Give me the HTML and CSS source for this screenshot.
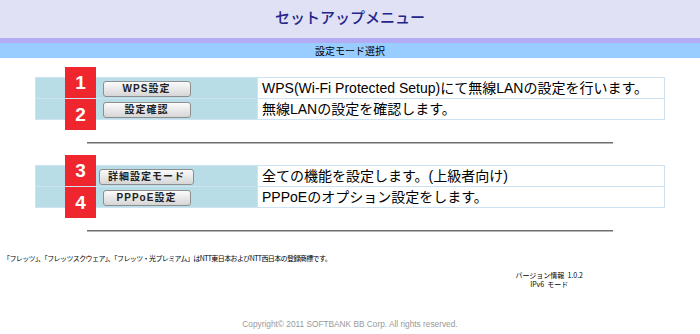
FILE: index.html
```html
<!DOCTYPE html>
<html lang="ja">
<head>
  <meta charset="UTF-8">
  <meta name="viewport" content="width=device-width, initial-scale=1.0">
  <title>セットアップメニュー</title>
  <link rel="stylesheet" href="styles.css">
</head>
<body>
  <div class="header">
    <h1 class="title">セットアップメニュー</h1>
  </div>
  <div class="stripe"></div>
  <div class="subtitle">設定モード選択</div>

  <div class="menu menu-first">
    <table class="menu-table">
      <tr>
        <td class="menu-btn"><button class="btn">WPS設定</button></td>
        <td class="menu-desc">WPS(Wi-Fi Protected Setup)にて無線LANの設定を行います。</td>
      </tr>
      <tr>
        <td class="menu-btn"><button class="btn">設定確認</button></td>
        <td class="menu-desc">無線LANの設定を確認します。</td>
      </tr>
    </table>
    <span class="badge badge-top">1</span>
    <span class="badge badge-bottom">2</span>
  </div>

  <hr class="rule">

  <div class="menu">
    <table class="menu-table">
      <tr>
        <td class="menu-btn"><button class="btn">詳細設定モード</button></td>
        <td class="menu-desc">全ての機能を設定します。(上級者向け)</td>
      </tr>
      <tr>
        <td class="menu-btn"><button class="btn">PPPoE設定</button></td>
        <td class="menu-desc">PPPoEのオプション設定をします。</td>
      </tr>
    </table>
    <span class="badge badge-top">3</span>
    <span class="badge badge-bottom">4</span>
  </div>

  <hr class="rule">

  <p class="note">「フレッツ」、「フレッツスクウェア」、「フレッツ・光プレミアム」はNTT東日本およびNTT西日本の登録商標です。</p>

  <div class="version">
    <div class="version-box">
      <div>バージョン情報&nbsp;&nbsp;1.0.2</div>
      <div>IPv6&nbsp;&nbsp;モード</div>
    </div>
  </div>

  <p class="copyright">Copyright© 2011 SOFTBANK BB Corp. All rights reserved.</p>
</body>
</html>
```

FILE: styles.css
```css
body {
  margin: 0;
  font-family: "Liberation Sans", "Noto Sans CJK JP", sans-serif;
  background-color: white;
  color: black;
}
.header {
  background: #e1e1f5;
  height: 38px;
}
.title {
  margin: 0;
  text-align: center;
  font-size: 15px;
  font-weight: 500;
  line-height: 34px;
  color: #25258a;
  font-family: "Noto Sans CJK JP", sans-serif;
}
.stripe {
  height: 5px;
  background: #b4abf5;
}
.subtitle {
  height: 15px;
  line-height: 15px;
  background: #99ccff;
  text-align: center;
  font-size: 10px;
  font-family: "Noto Sans CJK JP", sans-serif;
}
.menu {
  position: relative;
  width: 630px;
  margin-left: 35px;
}
.menu-first {
  margin-top: 19px;
}
.menu-table {
  width: 100%;
  border-collapse: collapse;
}
.menu-table td {
  height: 20px;
  padding: 0;
  border: 1px solid #cde2f3;
}
.menu-btn {
  width: 221px;
  background: #b9dde6;
  text-align: center;
}
.menu-desc {
  padding-left: 4px !important;
  font-size: 14px;
  line-height: 19px;
  white-space: nowrap;
}
.btn {
  min-width: 88px;
  height: 16px;
  padding: 0 8px;
  border: 1px solid #8e8e8e;
  border-radius: 3px;
  background: linear-gradient(#fbfbfb, #d6d6d6);
  font-family: "Liberation Sans", "Noto Sans CJK JP", sans-serif;
  font-size: 10px;
  font-weight: bold;
  letter-spacing: 1px;
  line-height: 14px;
  color: #222;
  vertical-align: middle;
}
.badge {
  position: absolute;
  left: 30px;
  width: 31px;
  height: 31px;
  background: #f0262e;
  color: white;
  font-size: 19px;
  font-weight: bold;
  display: flex;
  align-items: center;
  justify-content: center;
}
.badge-top {
  top: -10px;
}
.badge-bottom {
  top: 22px;
}
.rule {
  width: 526px;
  height: 0;
  margin: 22px auto 21px;
  border: none;
  border-top: 1px solid #6f6f6f;
  border-bottom: 1px solid #b5b5b5;
}
.note {
  margin: 22px 0 0 3px;
  font-size: 7px;
  letter-spacing: -0.6px;
  line-height: 9px;
  font-family: "Noto Sans CJK JP", sans-serif;
}
.version {
  display: flex;
  justify-content: flex-end;
  padding-right: 117px;
  margin-top: 8px;
}
.version-box {
  text-align: center;
  font-size: 7px;
  line-height: 9px;
  font-family: "Noto Sans CJK JP", sans-serif;
}
.copyright {
  margin: 30px 0 0;
  text-align: center;
  font-size: 8.3px;
  color: #999;
}
```
